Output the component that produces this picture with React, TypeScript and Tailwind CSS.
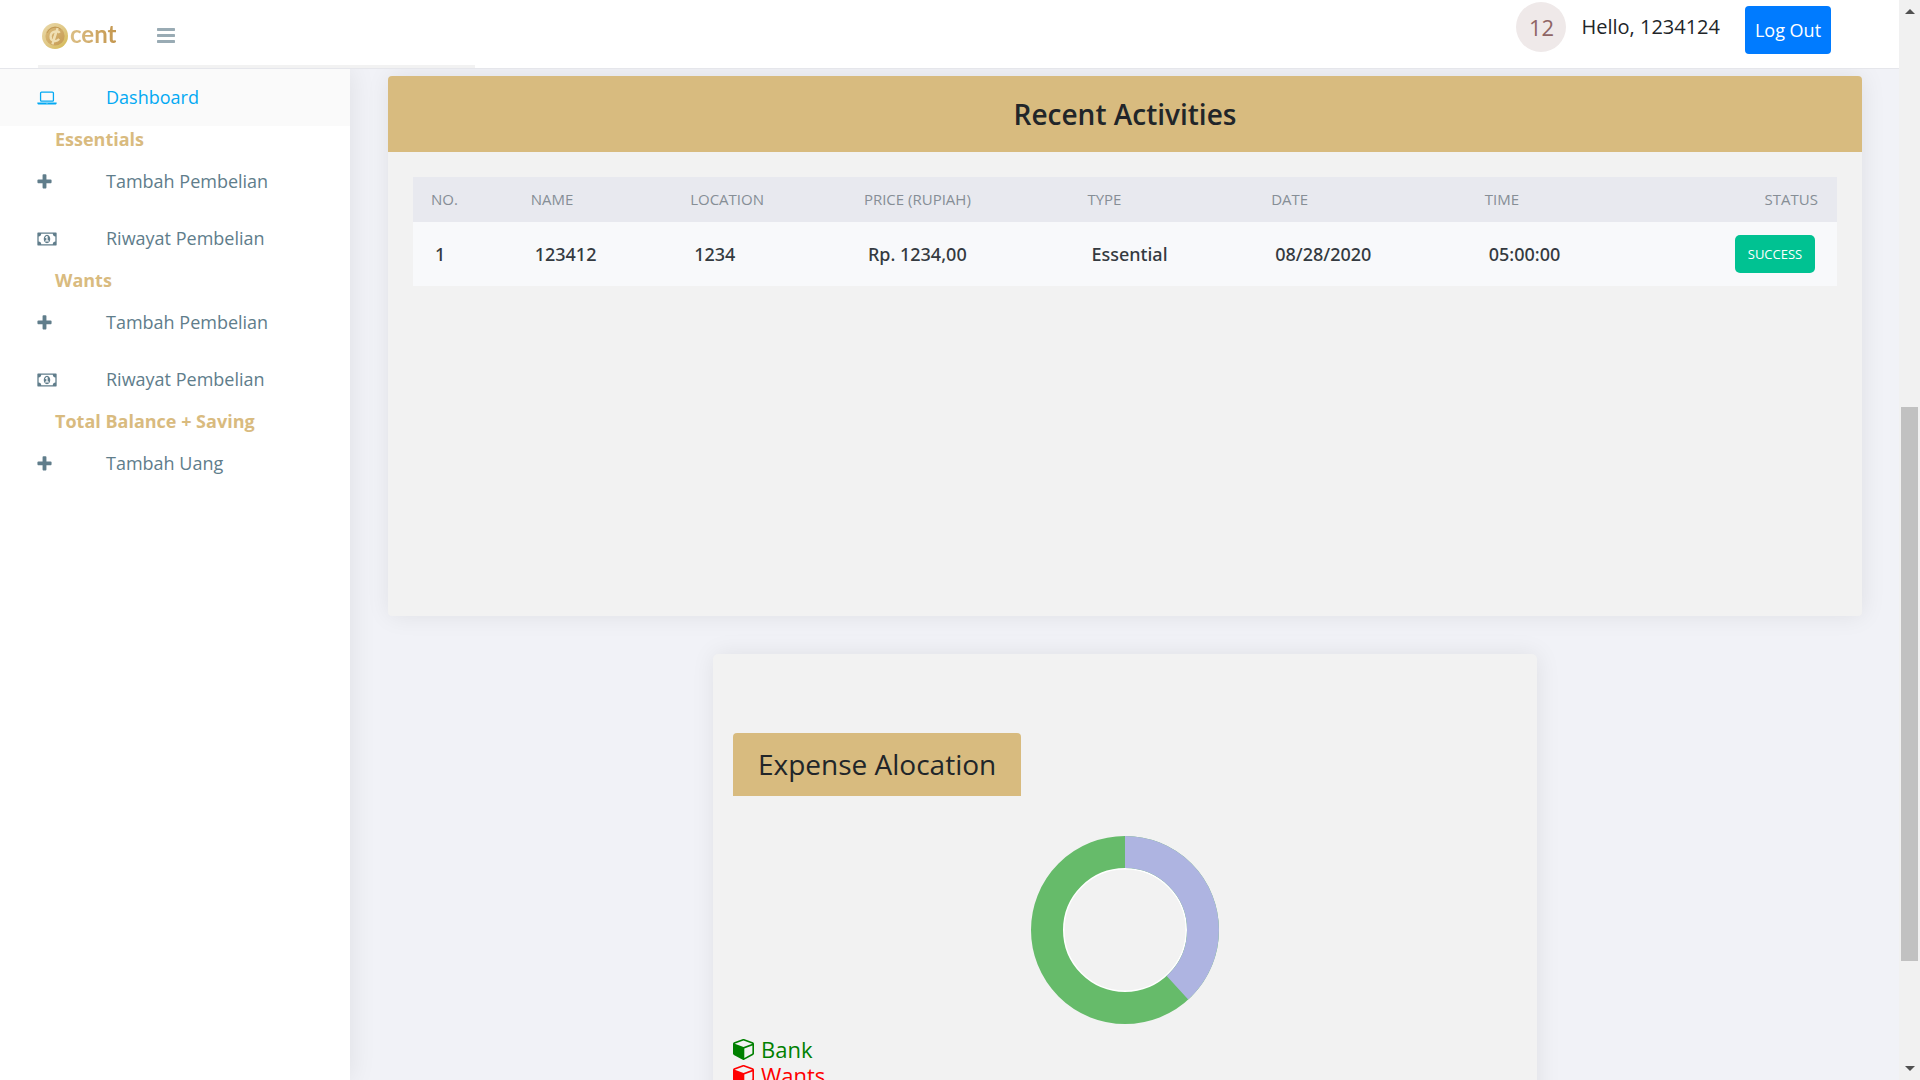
import React from "react";

type IconProps = { className?: string };

const PlusIcon = ({ className }: IconProps) => (
  <svg viewBox="192 0 1408 1792" fill="currentColor" className={className} aria-hidden="true">
    <path d="M1600 736v192q0 40-28 68t-68 28h-416v416q0 40-28 68t-68 28h-192q-40 0-68-28t-28-68v-416h-416q-40 0-68-28t-28-68v-192q0-40 28-68t68-28h416v-416q0-40 28-68t68-28h192q40 0 68 28t28 68v416h416q40 0 68 28t28 68z" />
  </svg>
);

const LaptopIcon = ({ className }: IconProps) => (
  <svg viewBox="0 0 1920 1792" fill="currentColor" className={className} aria-hidden="true">
    <path d="M416 1280q-66 0-113-47t-47-113v-704q0-66 47-113t113-47h1088q66 0 113 47t47 113v704q0 66-47 113t-113 47h-1088zm-32-864v704q0 13 9.5 22.5t22.5 9.5h1088q13 0 22.5-9.5t9.5-22.5v-704q0-13-9.5-22.5t-22.5-9.5h-1088q-13 0-22.5 9.5t-9.5 22.5zm1376 928h160v96q0 40-47 68t-113 28h-1600q-66 0-113-28t-47-68v-96h1760zm-720 96q16 0 16-16t-16-16h-160q-16 0-16 16t16 16h160z" />
  </svg>
);

const MoneyIcon = ({ className }: IconProps) => (
  <svg viewBox="0 0 1920 1792" fill="currentColor" className={className} aria-hidden="true">
    <path d="M768 1152h384v-96h-128v-448h-114l-148 137 77 80q42-37 55-57h2v288h-128v96zm512-256q0 70-21 142t-59.5 134-101.5 101-138 39-138-39-101.5-101-59.5-134-21-142 21-142 59.5-134 101.5-101 138-39 138 39 101.5 101 59.5 134 21 142zm512 256v-512q-106 0-181-75t-75-181h-1152q0 106-75 181t-181 75v512q106 0 181 75t75 181h1152q0-106 75-181t181-75zm128-832v1152q0 26-19 45t-45 19h-1792q-26 0-45-19t-19-45v-1152q0-26 19-45t45-19h1792q26 0 45 19t19 45z" />
  </svg>
);

const BarsIcon = ({ className }: IconProps) => (
  <svg viewBox="128 0 1536 1792" fill="currentColor" className={className} aria-hidden="true">
    <path d="M1664 1344v128q0 26-19 45t-45 19h-1408q-26 0-45-19t-19-45v-128q0-26 19-45t45-19h1408q26 0 45 19t19 45zm0-512v128q0 26-19 45t-45 19h-1408q-26 0-45-19t-19-45v-128q0-26 19-45t45-19h1408q26 0 45 19t19 45zm0-512v128q0 26-19 45t-45 19h-1408q-26 0-45-19t-19-45v-128q0-26 19-45t45-19h1408q26 0 45 19t19 45z" />
  </svg>
);

const CubeIcon = ({ className }: IconProps) => (
  <svg viewBox="0 64 1664 1792" fill="currentColor" className={className} aria-hidden="true">
    <path d="M896 1629l640-349v-636l-640 233v752zm-64-865l698-254-698-254-698 254zm832-252v768q0 35-18 65t-49 47l-704 384q-28 16-61 16t-61-16l-704-384q-31-17-49-47t-18-65v-768q0-40 23-73t61-47l704-256q22-8 44-8t44 8l704 256q38 14 61 47t23 73z" />
  </svg>
);

const CoinLogo = () => (
  <svg viewBox="0 0 50 50" className="size-[26px]" aria-hidden="true">
    <defs>
      <linearGradient id="rim" x1="0" y1="0" x2="1" y2="1">
        <stop offset="0" stopColor="#ead9ac" />
        <stop offset="0.55" stopColor="#dfc783" />
        <stop offset="1" stopColor="#d3b84e" />
      </linearGradient>
      <linearGradient id="face" x1="0" y1="0" x2="1" y2="1">
        <stop offset="0" stopColor="#dcbd7c" />
        <stop offset="1" stopColor="#c59a54" />
      </linearGradient>
    </defs>
    <circle cx="25" cy="25" r="25" fill="url(#rim)" />
    <circle cx="25" cy="25" r="18.5" fill="url(#face)" />
    <path d="M10 19A16.500 16.500 0 0 1 36 12" fill="none" stroke="#b98f4c" strokeWidth="1.500" />
    <path
      d="M34 19C31 14 17 15 16.500 26C16.500 36 28 37 33 31M30 10L20 41"
      fill="none"
      stroke="#efdfb3"
      strokeWidth="4.500"
    />
    <path d="M26 19L22 31" stroke="#efdfb3" strokeWidth="3" />
  </svg>
);

const sections = [
  {
    title: "Essentials",
    items: [
      { label: "Tambah Pembelian", icon: "plus" },
      { label: "Riwayat Pembelian", icon: "money" },
    ],
  },
  {
    title: "Wants",
    items: [
      { label: "Tambah Pembelian", icon: "plus" },
      { label: "Riwayat Pembelian", icon: "money" },
    ],
  },
  { title: "Total Balance + Saving", items: [{ label: "Tambah Uang", icon: "plus" }] },
];

const Header = () => (
  <header className="relative z-10 flex h-[69px] shrink-0 items-stretch border-b border-[#e5e6eb] bg-white">
    <div className="flex w-[475px] pl-[38px]">
      <div className="flex flex-1 items-center border-b-3 border-[#f2f2f2] pl-1">
        <a href="#home" className="flex items-center gap-0.5 pt-1.5" aria-label="cent">
          <CoinLogo />
          <span className="bg-linear-to-r from-[#dcbf85] to-[#c4974f] bg-clip-text pb-1 font-['Lato'] text-2xl leading-6 font-bold text-transparent">
            cent
          </span>
        </a>
        <button type="button" aria-label="Toggle menu" className="ml-[41px] pt-1.5 text-[#99abb4]">
          <BarsIcon className="h-[21px] w-[18px]" />
        </button>
      </div>
    </div>
    <div className="ml-auto flex items-start pr-[68px]">
      <div className="mt-0.5 flex size-[50px] items-center justify-center rounded-full bg-[#efe9e9] text-[22px] text-[#8f6565]">
        12
      </div>
      <span className="mt-3 ml-[15px] text-xl leading-[30px] text-[#212529]">Hello, 1234124</span>
      <button
        type="button"
        className="mt-1.5 ml-[25px] h-12 w-[86px] rounded-[4px] bg-[#007bff] text-lg text-white"
      >
        Log Out
      </button>
    </div>
  </header>
);

const Sidebar = () => (
  <nav className="relative w-[350px] shrink-0 bg-white text-lg shadow-[1px_0_25px_rgba(0,0,0,0.08)]">
    <a
      href="#dashboard"
      className="flex h-[57px] items-center bg-[#fafafa] pb-0.5 pl-[37px] text-[#03a9f3]"
    >
      <span className="w-[69px] pt-0.5">
        <LaptopIcon className="h-[18px] w-5" />
      </span>
      Dashboard
    </a>
    {sections.map((section) => (
      <section key={section.title}>
        <h2 className="pl-[55px] leading-[27px] font-bold text-[#d9bb7f]">{section.title}</h2>
        <ul>
          {section.items.map((item) => (
            <li key={item.label}>
              <a
                href="#entry"
                className="flex h-[57px] items-center pb-0.5 pl-[37px] text-[#607d8b]"
              >
                <span className="w-[69px] pt-0.5">
                  {item.icon === "plus" ? (
                    <PlusIcon className="h-[18px] w-[15px]" />
                  ) : (
                    <MoneyIcon className="h-[18px] w-5" />
                  )}
                </span>
                {item.label}
              </a>
            </li>
          ))}
        </ul>
      </section>
    ))}
  </nav>
);

const columns = [
  { label: "No.", value: "1", width: "w-[7%]" },
  { label: "Name", value: "123412", width: "w-[11.2%]" },
  { label: "Location", value: "1234", width: "w-[12.2%]" },
  { label: "Price (Rupiah)", value: "Rp. 1234,00", width: "w-[15.7%]" },
  { label: "Type", value: "Essential", width: "w-[12.9%]" },
  { label: "Date", value: "08/28/2020", width: "w-[15%]" },
  { label: "Time", value: "05:00:00", width: "w-[15%]" },
];

const Activities = () => (
  <section className="min-h-[540px] rounded-[4px] bg-[#f2f2f2] shadow-[1px_0_25px_rgba(0,0,0,0.08)]">
    <h2 className="rounded-t-[4px] bg-[#d8bb7f] py-[17px] text-center text-[28px] leading-[42px] font-semibold text-[#212529]">
      Recent Activities
    </h2>
    <div className="p-[25px]">
      <table className="w-full table-fixed text-left">
        <thead>
          <tr className="h-[45px] bg-[#e8e9ef] text-[15px] text-[#868e96] uppercase">
            {columns.map((column) => (
              <th key={column.label} className={`${column.width} pl-[18px] font-normal`}>
                {column.label}
              </th>
            ))}
            <th className="pr-[19px] text-right font-normal">Status</th>
          </tr>
        </thead>
        <tbody>
          <tr className="h-16 bg-[#f8f9fb] font-['Noto_Sans','Open_Sans',sans-serif] text-lg text-[#343a40]">
            {columns.map((column) => (
              <td key={column.label} className="pl-[22px] font-medium">
                {column.value}
              </td>
            ))}
            <td className="pr-[22px] text-right">
              <button
                type="button"
                className="ml-auto block h-[38px] w-20 rounded-[5px] bg-[#00c292] font-['Open_Sans',sans-serif] text-[13px] text-white uppercase"
              >
                Success
              </button>
            </td>
          </tr>
        </tbody>
      </table>
    </div>
  </section>
);

const ExpenseChart = () => {
  const spent = 0.382;
  const radius = 78;
  const length = 2 * Math.PI * radius;
  return (
    <svg
      viewBox="0 0 188 188"
      className="mx-auto mt-10 size-[188px]"
      role="img"
      aria-label="Expense allocation chart"
    >
      <circle cx="94" cy="94" r="62" fill="none" stroke="#ffffff" strokeWidth="3" />
      <g transform="rotate(-90 94 94)" fill="none" strokeWidth="32">
        <circle cx="94" cy="94" r={radius} stroke="#66bb6a" />
        <circle
          cx="94"
          cy="94"r={radius}
          stroke="#aeb4e1"
          strokeDasharray={`${length * spent} ${length}`}
        />
      </g>
    </svg>
  );
};

const Expenses = () => (
  <section className="mx-auto mt-[38px] h-[540px] w-[824px] max-w-full rounded-[5px] bg-[#f2f2f2] px-5 pt-[79px] shadow-[1px_0_25px_rgba(0,0,0,0.08)]">
    <h2 className="w-fit rounded-t-[4px] bg-[#d8bb7f] px-[25px] py-2.5 text-[28px] leading-[43px] text-[#212529]">
      Expense Alocation
    </h2>
    <ExpenseChart />
    <ul className="mt-3 text-[22px] leading-[26px]">
      <li className="flex items-center gap-[7px] text-[#008000]">
        <CubeIcon className="h-[23px] w-[21px]" />
        Bank
      </li>
      <li className="flex items-center gap-[7px] text-[#ff0000]">
        <CubeIcon className="h-[23px] w-[21px]" />
        Wants
      </li>
    </ul>
  </section>
);

const ScrollTrack = () => (
  <div className="flex h-screen w-[21px] shrink-0 flex-col items-center bg-[#f1f1f1]" aria-hidden="true">
    <svg viewBox="0 0 10 5" className="mt-[9px] h-[5px] w-2.5 shrink-0">
      <path d="M0 5L5 0L10 5z" fill="#505050" />
    </svg>
    <div className="flex w-full flex-1 flex-col items-center">
      <div className="flex-[393]" />
      <div className="w-[17px] flex-[554] bg-[#c1c1c1]" />
      <div className="flex-[105]" />
    </div>
    <svg viewBox="0 0 10 5" className="mb-[9px] h-[5px] w-2.5 shrink-0">
      <path d="M0 0L10 0L5 5z" fill="#505050" />
    </svg>
  </div>
);

export default function App() {
  return (
    <div className="flex h-screen overflow-hidden bg-[#f1f2f7] font-['Open_Sans',sans-serif]">
      <div className="flex min-w-0 flex-1 flex-col">
        <Header />
        <div className="flex min-h-0 flex-1">
          <Sidebar />
          <main className="min-w-0 flex-1 overflow-hidden pt-[7px] pr-[37px] pl-[38px]">
            <Activities />
            <Expenses />
          </main>
        </div>
      </div>
      <ScrollTrack />
    </div>
  );
}
